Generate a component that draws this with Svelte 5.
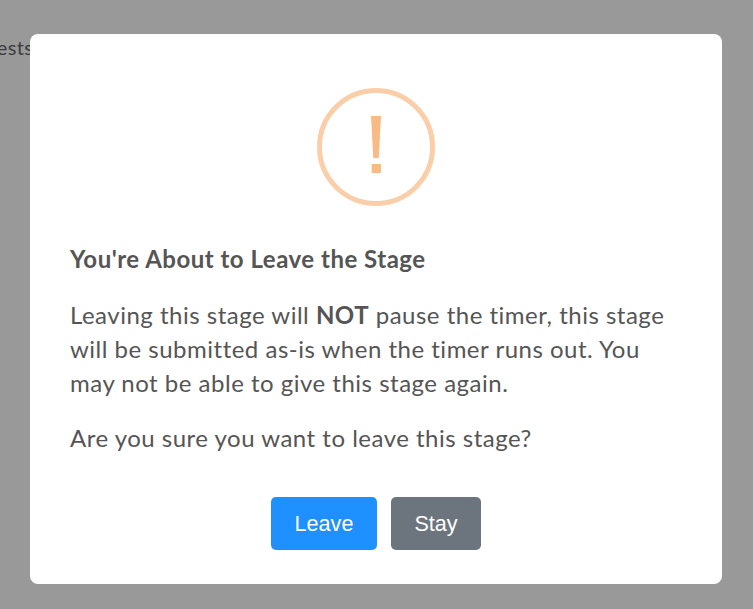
<script>
  let leave = () => {};
  let stay = () => {};
</script>

<div class="page">
  <p class="behind">Tests</p>
</div>

<div class="overlay">
  <div class="modal">
    <svg class="icon" width="118" height="118" viewBox="0 0 118 118" aria-hidden="true">
      <circle cx="59" cy="59" r="56.5" fill="none" stroke="#facea8" stroke-width="5" />
      <polygon points="54,28 64,28 61.8,70 56.3,70" fill="#f8bb86" />
      <rect x="54.7" y="76" width="9.3" height="9" fill="#f8bb86" />
    </svg>
    <h2>You're About to Leave the Stage</h2>
    <p>Leaving this stage will <strong>NOT</strong> pause the timer, this stage will be submitted as-is when the timer runs out. You may not be able to give this stage again.</p>
    <p>Are you sure you want to leave this stage?</p>
    <div class="actions">
      <button class="primary" onclick={leave}>Leave</button>
      <button class="secondary" onclick={stay}>Stay</button>
    </div>
  </div>
</div>

<style>
  :global(body) {
    font-family: Lato, sans-serif;
    color: #555;
  }

  .page {
    height: 609px;
    overflow: hidden;
  }

  .behind {
    margin: -3px 0 0 -13px;
    padding-top: 38px;
    font-size: 20px;
    line-height: 24px;
    letter-spacing: 0.4px;
    color: #666;
  }

  .overlay {
    position: fixed;
    inset: 0;
    background: rgba(0, 0, 0, 0.4);
    display: flex;
    justify-content: flex-start;
    align-items: flex-start;
  }

  .modal {
    width: 692px;
    height: 550px;
    box-sizing: border-box;
    margin: 34px 0 0 30px;
    padding: 54px 40px 0;
    background: #fff;
    border-radius: 8px;
    display: flex;
    flex-direction: column;
  }

  .icon {
    align-self: center;
    flex: none;
  }

  h2 {
    margin: 38px 0 0;
    font-size: 24px;
    line-height: 30px;
    font-weight: 700;
    letter-spacing: 0.5px;
    color: #555;
  }

  p {
    margin: 24px 0 0;
    font-size: 24px;
    line-height: 34px;
    letter-spacing: 0.5px;
    color: #555;
  }

  p + p {
    margin-top: 21px;
  }

  strong {
    font-weight: 700;
  }

  .actions {
    display: flex;
    justify-content: center;
    gap: 14px;
    margin-top: 42px;
  }

  button {
    height: 53px;
    border: none;
    border-radius: 5px;
    color: #fff;
    font-family: "Liberation Sans", Arial, sans-serif;
    font-size: 21.6px;
    padding: 0;
  }

  .primary {
    width: 106px;
    background: #1e90ff;
  }

  .secondary {
    width: 90px;
    background: #6c757d;
  }
</style>
